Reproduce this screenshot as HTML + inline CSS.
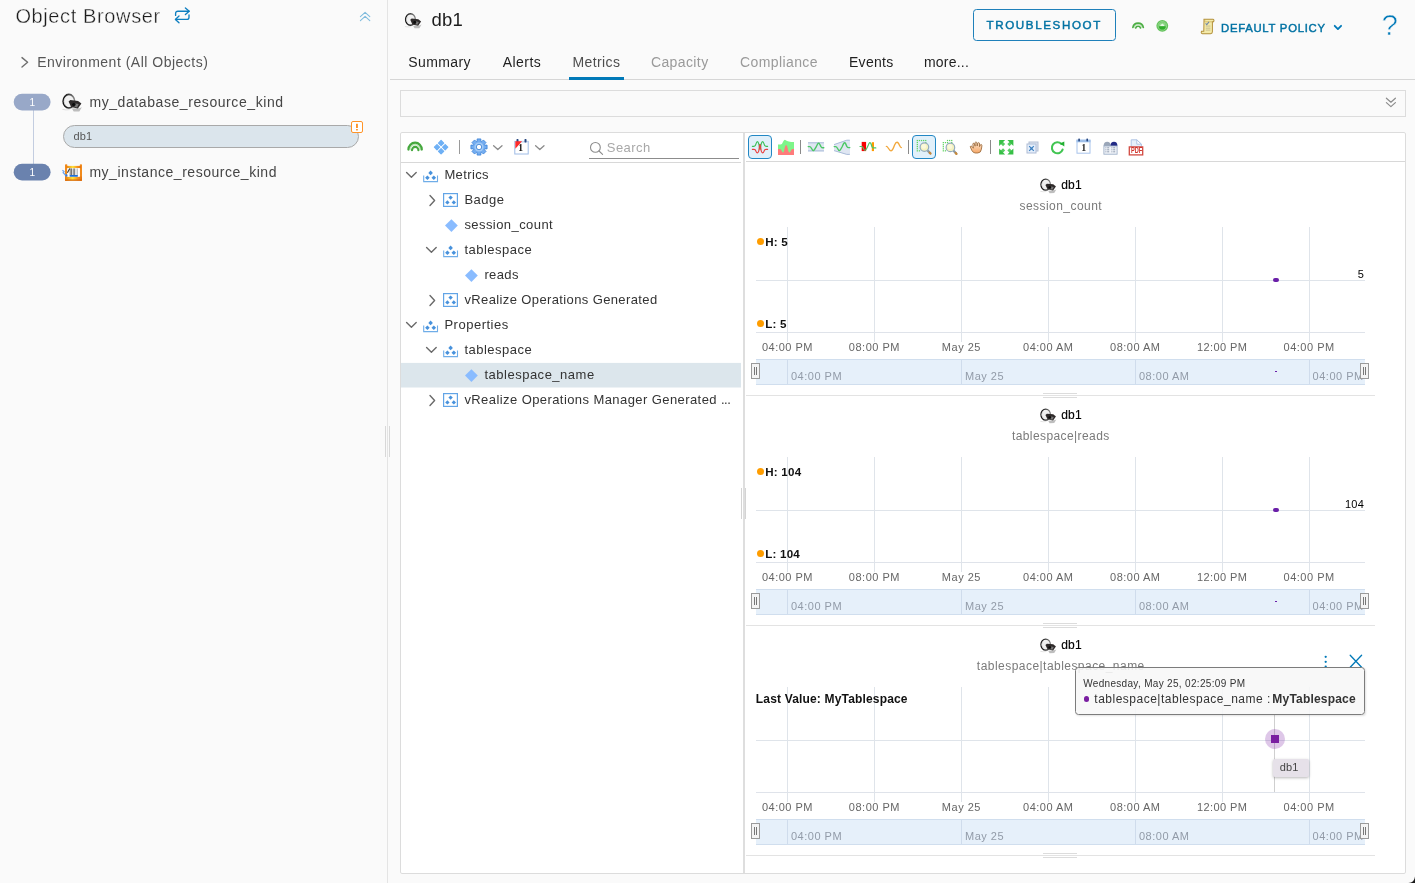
<!DOCTYPE html>
<html lang="en"><head><meta charset="utf-8"><title>Object Browser - db1 Metrics</title>
<style>
html,body{margin:0;padding:0;}
body{width:1415px;height:883px;overflow:hidden;position:relative;background:#fafafa;font-family:"Liberation Sans", sans-serif;}
#root{position:absolute;left:0;top:0;width:1415px;height:883px;will-change:transform;}
.t{position:absolute;white-space:nowrap;line-height:1;}
.r{position:absolute;box-sizing:border-box;}
svg{overflow:visible;}
</style></head><body>
<div id="root">
<div class="r" style="left:387px;top:0px;width:1px;height:883px;background:#e4e4e4;"></div>
<div class="r" style="left:385px;top:426px;width:1px;height:31px;background:#d8d8d8;"></div>
<div class="r" style="left:389px;top:426px;width:1px;height:31px;background:#d8d8d8;"></div>
<div class="t" style="left:15.40px;top:6.27px;font-size:20px;color:#1c1c1c;letter-spacing:0.62px;-webkit-text-stroke:0.35px #fafafa;">Object Browser</div>
<svg class="r" style="left:172px;top:4px;" width="22" height="22" viewBox="0 0 22 22" preserveAspectRatio="none"><g fill="none" stroke="#0f7fc0" stroke-width="1.35" stroke-linecap="round" stroke-linejoin="round"><path d="M3.6 11.4V9.4a2.2 2.2 0 0 1 2.2-2.2H17"/><path d="M13.4 3.9l3.8 3.3-3.8 3.4"/><path d="M17 10.8v2.4a2.2 2.2 0 0 1-2.2 2.2H3.6"/><path d="M7 12l-3.6 3.4L7 18.8"/></g></svg>
<svg class="r" style="left:358px;top:8px;" width="16" height="16" viewBox="0 0 16 16" preserveAspectRatio="none"><g fill="none" stroke="#7fbbdd" stroke-width="1.1" stroke-linecap="round" stroke-linejoin="round"><path d="M2.4 8.6L7.1 4.3l4.7 4.3"/><path d="M2.4 12.7l4.7-4.3 4.7 4.3"/></g></svg>
<svg class="r" style="left:18px;top:54px;" width="14" height="16" viewBox="0 0 14 16" preserveAspectRatio="none"><path d="M4 3.6l5.6 4.7L4 13" fill="none" stroke="#6e6e6e" stroke-width="1.4" stroke-linecap="round" stroke-linejoin="round"/></svg>
<div class="t" style="left:37.20px;top:55.15px;font-size:14px;color:#565656;letter-spacing:0.5px;">Environment (All Objects)</div>
<div class="r" style="left:33px;top:108px;width:1px;height:58px;background:#c3cde0;"></div>
<svg class="r" style="left:10px;top:90px;" width="46" height="24" viewBox="0 0 46 24" preserveAspectRatio="none"><rect x="3.7" y="3.7" width="36.9" height="16.7" rx="8.35" fill="#98a8c8"/></svg>
<div class="t" style="left:32.20px;top:97.73px;font-size:10px;color:#fff;transform:translateX(-50%);">1</div>
<svg class="r" style="left:10px;top:160px;" width="46" height="24" viewBox="0 0 46 24" preserveAspectRatio="none"><rect x="3.7" y="3.8" width="36.9" height="16.7" rx="8.35" fill="#6a82ae"/></svg>
<div class="t" style="left:32.20px;top:167.73px;font-size:10px;color:#fff;transform:translateX(-50%);">1</div>
<svg class="r" style="left:56px;top:88px;" width="32" height="28" viewBox="0 0 32 28" preserveAspectRatio="none"><defs><linearGradient id="rg13" x1="0" y1="0.5" x2="1" y2="0.3"><stop offset="0" stop-color="#111"/><stop offset="0.55" stop-color="#3a3a3a"/><stop offset="1" stop-color="#8a8a8a"/></linearGradient><filter id="bf13" x="-20%" y="-20%" width="140%" height="140%"><feGaussianBlur stdDeviation="0.35"/></filter></defs><g transform="translate(12.9,13.2) scale(1.0)" filter="url(#bf13)"><path d="M-6.5 8.2q4 1 7.4 0.2" fill="none" stroke="#dedede" stroke-width="1"/><path d="M3 7.4l7.4-0.4 2.6-1 -2.6 4.2 -5.6 0.2z" fill="#a8a8a8" opacity="0.75"/><ellipse cx="0" cy="0" rx="5.8" ry="6.8" fill="#f1f1f1" stroke="url(#rg13)" stroke-width="1.55"/><path d="M-3.6 -3.4a5 5.4 0 0 0 0.4 7.4" fill="none" stroke="#cfcfcf" stroke-width="0.8"/><path d="M-0.3 0.4l1.7-1.5 7.8 0.8 3.3 2.6 -3.5 5 -6.8-1.5z" fill="#2e2b2b"/><path d="M6.2 2.2l3.6 0.6 -1.6 3.4 -2.6-0.6z" fill="#8c8c8c" opacity="0.8"/><ellipse cx="5" cy="3.4" rx="1.7" ry="1.5" fill="#0c0c0c"/></g></svg>
<div class="t" style="left:89.40px;top:95.05px;font-size:14px;color:#454545;letter-spacing:0.58px;">my_database_resource_kind</div>
<div class="r" style="left:63px;top:124.5px;width:296px;height:23px;background:#dbe5ec;border:1px solid #a9a9a9;border-radius:12px;"></div>
<div class="t" style="left:73.60px;top:130.89px;font-size:11px;color:#565656;letter-spacing:0.1px;">db1</div>
<div class="r" style="left:350.5px;top:121px;width:12px;height:12px;background:#fff;border:1.4px solid #ff9428;border-radius:2px;"></div>
<svg class="r" style="left:350px;top:120px;" width="14" height="14" viewBox="0 0 14 14" preserveAspectRatio="none"><rect x="6.0" y="3.7" width="1.9" height="4.4" rx="0.4" fill="#ff9428"/><rect x="6.0" y="8.9" width="1.9" height="1.5" rx="0.4" fill="#ff9428"/></svg>
<svg class="r" style="left:56px;top:158px;" width="32" height="28" viewBox="0 0 32 28" preserveAspectRatio="none"><defs><linearGradient id="og" x1="0" y1="0" x2="1" y2="0"><stop offset="0" stop-color="#e8780f"/><stop offset="0.45" stop-color="#ffe23a"/><stop offset="0.75" stop-color="#f7941e"/><stop offset="1" stop-color="#e07010"/></linearGradient><filter id="ib" x="-20%" y="-20%" width="140%" height="140%"><feGaussianBlur stdDeviation="0.3"/></filter></defs><g filter="url(#ib)"><rect x="9" y="6.2" width="2.3" height="16.5" rx="0.8" fill="#f08a1c"/><rect x="23.8" y="6.2" width="2.2" height="16.5" rx="0.8" fill="#f08a1c"/><rect x="10" y="7.9" width="15" height="2.3" fill="url(#og)"/><rect x="9" y="18.6" width="17" height="4.2" rx="0.9" fill="url(#og)"/><rect x="9" y="21.4" width="17" height="1.4" rx="0.7" fill="#d8690f"/><rect x="11.3" y="10.2" width="12.5" height="8.5" fill="#fff"/><g fill="#3a3a3a"><rect x="13.8" y="10.4" width="0.7" height="6.8"/><rect x="15.3" y="10.4" width="0.7" height="6.8"/><rect x="16.8" y="10.4" width="0.7" height="6.8"/><rect x="18.2" y="10.4" width="0.6" height="6.8"/></g><g fill="#b5b5b5"><rect x="19.6" y="10.4" width="0.8" height="6.8"/><rect x="21" y="10.4" width="0.8" height="6.8"/></g><path d="M11.4 14.8l2.4-4.4" stroke="#3a3a3a" stroke-width="1.1"/><rect x="13.5" y="17" width="8.5" height="1.8" rx="0.8" fill="#1e6fdc"/><path d="M6.4 12.2l1.6 1.4-0.8 1 2 2.2 1.6 1.6" fill="none" stroke="#6fa5ec" stroke-width="1.3"/><circle cx="10.4" cy="17.4" r="1.1" fill="#2f7be0"/></g></svg>
<div class="t" style="left:89.40px;top:165.15px;font-size:14px;color:#454545;letter-spacing:0.53px;">my_instance_resource_kind</div>
<svg class="r" style="left:400px;top:8px;" width="30" height="24" viewBox="0 0 30 24" preserveAspectRatio="none"><defs><linearGradient id="rg21" x1="0" y1="0.5" x2="1" y2="0.3"><stop offset="0" stop-color="#111"/><stop offset="0.55" stop-color="#3a3a3a"/><stop offset="1" stop-color="#8a8a8a"/></linearGradient><filter id="bf21" x="-20%" y="-20%" width="140%" height="140%"><feGaussianBlur stdDeviation="0.5"/></filter></defs><g transform="translate(10.5,11.5) scale(0.85)" filter="url(#bf21)"><path d="M-6.5 8.2q4 1 7.4 0.2" fill="none" stroke="#dedede" stroke-width="1"/><path d="M3 7.4l7.4-0.4 2.6-1 -2.6 4.2 -5.6 0.2z" fill="#a8a8a8" opacity="0.75"/><ellipse cx="0" cy="0" rx="5.8" ry="6.8" fill="#f1f1f1" stroke="url(#rg21)" stroke-width="1.55"/><path d="M-3.6 -3.4a5 5.4 0 0 0 0.4 7.4" fill="none" stroke="#cfcfcf" stroke-width="0.8"/><path d="M-0.3 0.4l1.7-1.5 7.8 0.8 3.3 2.6 -3.5 5 -6.8-1.5z" fill="#2e2b2b"/><path d="M6.2 2.2l3.6 0.6 -1.6 3.4 -2.6-0.6z" fill="#8c8c8c" opacity="0.8"/><ellipse cx="5" cy="3.4" rx="1.7" ry="1.5" fill="#0c0c0c"/></g></svg>
<div class="t" style="left:431.40px;top:10.64px;font-size:18.5px;color:#1c1c1c;letter-spacing:0.3px;">db1</div>
<div class="t" style="left:408.30px;top:55.15px;font-size:14px;color:#1f1f1f;letter-spacing:0.4px;">Summary</div>
<div class="t" style="left:502.70px;top:55.15px;font-size:14px;color:#1f1f1f;letter-spacing:0.45px;">Alerts</div>
<div class="t" style="left:572.40px;top:55.15px;font-size:14px;color:#4d4d4d;letter-spacing:0.42px;">Metrics</div>
<div class="t" style="left:650.90px;top:55.15px;font-size:14px;color:#9a9a9a;letter-spacing:0.4px;">Capacity</div>
<div class="t" style="left:740.00px;top:55.15px;font-size:14px;color:#9a9a9a;letter-spacing:0.4px;">Compliance</div>
<div class="t" style="left:849.00px;top:55.15px;font-size:14px;color:#1f1f1f;letter-spacing:0.27px;">Events</div>
<div class="t" style="left:924.00px;top:55.15px;font-size:14px;color:#1f1f1f;letter-spacing:0.2px;">more...</div>
<div class="r" style="left:390px;top:79px;width:1025px;height:1px;background:#d6d6d6;"></div>
<div class="r" style="left:569px;top:77px;width:54.5px;height:3px;background:#0079b8;"></div>
<div class="r" style="left:973px;top:9px;width:143px;height:32px;border:1.2px solid #1f80ba;border-radius:3.5px;"></div>
<div class="t" style="left:986.50px;top:19.38px;font-size:11.6px;color:#0072a3;letter-spacing:1.62px;-webkit-text-stroke:0.45px #0072a3;">TROUBLESHOOT</div>
<svg class="r" style="left:1131px;top:18.4px;" width="14" height="14" viewBox="0 0 14 14" preserveAspectRatio="none"><g fill="none" stroke-linecap="round"><path d="M3.2 9.6a4 4 0 0 1 7.8 0" stroke="#c4e6be" stroke-width="1.2"/><path d="M1.9 9.4a5.3 5.3 0 0 1 10.4 0" stroke="#4cae44" stroke-width="1.7"/><path d="M4.7 10a2.5 2.5 0 0 1 4.8 0" stroke="#4cae44" stroke-width="1.6"/></g></svg>
<svg class="r" style="left:1155.4px;top:19.0px;" width="14" height="14" viewBox="0 0 14 14" preserveAspectRatio="none"><circle cx="7.3" cy="6.8" r="5.9" fill="#62c25a"/><circle cx="7.3" cy="6.8" r="4.3" fill="none" stroke="#a4e09e" stroke-width="0.7"/><circle cx="7.3" cy="6.8" r="3.5" fill="#8ed688"/><path d="M3.9 7.2a3.4 3.4 0 0 0 6.8 0z" fill="#2fae2b"/><path d="M5.2 6.9q0.2-1.6 1.4-1.6l0.7-0.9 0.7 0.9q1.2 0 1.4 1.6z" fill="#e4f6e2"/></svg>
<svg class="r" style="left:1200px;top:18.2px;" width="15" height="17" viewBox="0 0 15 16" preserveAspectRatio="none"><path d="M4 1.2h9q1.6 0.5 0.6 2.4h-1.2v9.4q0 1.8-1.8 1.8H2.4q-1.8-0.4-0.9-2.4h2.3z" fill="#f4eaa8" stroke="#b3903a" stroke-width="1"/><path d="M4 1.4q1.4 0.8 0.4 2.2h7.6" fill="none" stroke="#c9ab55" stroke-width="0.7"/><path d="M5.8 7.6h4.6M5.8 9.6h4.6M5.8 11.4h4.6" stroke="#b9b08a" stroke-width="0.7"/><path d="M5.6 5l1.2 1.3 2.2-2.6" fill="none" stroke="#6d86a8" stroke-width="1"/></svg>
<div class="t" style="left:1221.00px;top:22.83px;font-size:11.3px;color:#0072a3;letter-spacing:0.74px;-webkit-text-stroke:0.45px #0072a3;">DEFAULT POLICY</div>
<svg class="r" style="left:1332px;top:24px;" width="12" height="9" viewBox="0 0 12 9" preserveAspectRatio="none"><path d="M2.7 1.8l3.2 3.3 3.2-3.3" fill="none" stroke="#0079b8" stroke-width="1.8" stroke-linecap="round" stroke-linejoin="round"/></svg>
<div class="t" style="left:1381.60px;top:10.34px;font-size:29.6px;color:#0079b8;-webkit-text-stroke:0.55px #fafafa;">?</div>
<div class="r" style="left:400px;top:90px;width:1006px;height:27px;background:#fafafa;border:1px solid #dcdcdc;"></div>
<svg class="r" style="left:1384px;top:96px;" width="14" height="13" viewBox="0 0 14 13" preserveAspectRatio="none"><g fill="none" stroke="#8c8c8c" stroke-width="1.2" stroke-linecap="round" stroke-linejoin="round"><path d="M2.4 2.2l4.5 4 4.5-4"/><path d="M2.4 6.6l4.5 4 4.5-4"/></g></svg>
<div class="r" style="left:400px;top:132px;width:1006px;height:742px;background:#fff;border:1px solid #dcdcdc;border-radius:2px;"></div>
<div class="r" style="left:743px;top:133px;width:1.6px;height:740px;background:#dedede;"></div>
<div class="r" style="left:741px;top:488px;width:1px;height:31px;background:#d4d4d4;"></div>
<div class="r" style="left:745px;top:488px;width:1px;height:31px;background:#d4d4d4;"></div>
<div class="r" style="left:401px;top:162px;width:340px;height:1px;background:#d8d8d8;"></div>
<svg class="r" style="left:406px;top:139px;" width="18" height="14" viewBox="0 0 18 14" preserveAspectRatio="none"><g fill="none" stroke-linecap="round"><path d="M4 10.8a5 5.2 0 0 1 10.2 0" stroke="#c4e6be" stroke-width="1.6"/><path d="M2.4 10.6a6.7 6.9 0 0 1 13.4 0" stroke="#46a83e" stroke-width="2.2"/><path d="M6 11.2a3.2 3.3 0 0 1 6.4 0" stroke="#46a83e" stroke-width="2.1"/></g></svg>
<svg class="r" style="left:433px;top:139px;" width="16" height="16" viewBox="0 0 16 16" preserveAspectRatio="none"><path d="M8.1 1.4999999999999996l2.6 2.6-2.6 2.6-2.6-2.6z" fill="#6eb0f5" stroke="#6eb0f5" stroke-width="1.2" stroke-linejoin="round"/><path d="M4.0 5.6l2.6 2.6-2.6 2.6-2.6-2.6z" fill="#6eb0f5" stroke="#6eb0f5" stroke-width="1.2" stroke-linejoin="round"/><path d="M12.2 5.6l2.6 2.6-2.6 2.6-2.6-2.6z" fill="#6eb0f5" stroke="#6eb0f5" stroke-width="1.2" stroke-linejoin="round"/><path d="M8.1 9.700000000000001l2.6 2.6-2.6 2.6-2.6-2.6z" fill="#6eb0f5" stroke="#6eb0f5" stroke-width="1.2" stroke-linejoin="round"/></svg>
<div class="r" style="left:459px;top:140px;width:1.3px;height:14px;background:#9a9a9a;"></div>
<svg class="r" style="left:470px;top:138px;" width="18" height="18" viewBox="0 0 18 18" preserveAspectRatio="none"><path d="M17.08,7.11L17.08,10.89L14.70,10.89L14.36,11.69L16.05,13.38L13.38,16.05L11.69,14.36L10.89,14.70L10.89,17.08L7.11,17.08L7.11,14.70L6.31,14.36L4.62,16.05L1.95,13.38L3.64,11.69L3.30,10.89L0.92,10.89L0.92,7.11L3.30,7.11L3.64,6.31L1.95,4.62L4.62,1.95L6.31,3.64L7.11,3.30L7.11,0.92L10.89,0.92L10.89,3.30L11.69,3.64L13.38,1.95L16.05,4.62L14.36,6.31L14.70,7.11z" fill="#74adf0" stroke="#3a82d8" stroke-width="0.8" stroke-linejoin="round"/><circle cx="9" cy="9" r="4.6" fill="#a4cbf6"/><circle cx="9" cy="9" r="2.7" fill="#fff" stroke="#2f78d0" stroke-width="0.8"/></svg>
<svg class="r" style="left:492.4px;top:144.3px;" width="12" height="8" viewBox="0 0 12 8" preserveAspectRatio="none"><path d="M1.6 1.8l4.2 3.8 4.2-3.8" fill="none" stroke="#8a8a8a" stroke-width="1.3" stroke-linecap="round" stroke-linejoin="round"/></svg>
<svg class="r" style="left:513.5px;top:139px;" width="15" height="16" viewBox="0 0 15 16" preserveAspectRatio="none"><rect x="0.8" y="2.4" width="13.4" height="12.6" fill="#fff" stroke="#9fbce6" stroke-width="1"/><rect x="1.3" y="2.0" width="12.4" height="1.6" fill="#c9dcf5"/><rect x="2.5" y="0.1" width="2" height="3.3" rx="0.6" fill="#27467f"/><rect x="10.5" y="0.1" width="2" height="3.3" rx="0.6" fill="#27467f"/><path d="M1.3 2.2h6.8L1.3 9.8z" fill="#ff2a2a"/></svg>
<div class="t" style="left:518.30px;top:144.16px;font-size:9.5px;color:#111;font-weight:700;font-family:'Liberation Serif',serif;">1</div>
<svg class="r" style="left:534.2px;top:144.3px;" width="12" height="8" viewBox="0 0 12 8" preserveAspectRatio="none"><path d="M1.6 1.8l4.2 3.8 4.2-3.8" fill="none" stroke="#8a8a8a" stroke-width="1.3" stroke-linecap="round" stroke-linejoin="round"/></svg>
<svg class="r" style="left:588px;top:140px;" width="16" height="16" viewBox="0 0 16 16" preserveAspectRatio="none"><circle cx="7.4" cy="7.4" r="4.9" fill="none" stroke="#8c8c8c" stroke-width="1.1"/><path d="M11 11l3.6 3.4" stroke="#8c8c8c" stroke-width="1.1" stroke-linecap="round"/></svg>
<div class="t" style="left:606.80px;top:140.80px;font-size:13px;color:#a8a8a8;letter-spacing:0.45px;">Search</div>
<div class="r" style="left:589px;top:158px;width:150px;height:1px;background:#8c8c8c;"></div>
<svg class="r" style="left:405px;top:170.3px;" width="13" height="10" viewBox="0 0 13 10" preserveAspectRatio="none"><path d="M1.6 2.6l4.8 4.6 4.8-4.6" fill="none" stroke="#6a6a6a" stroke-width="1.4" stroke-linecap="round" stroke-linejoin="round"/></svg>
<svg class="r" style="left:422.7px;top:169.20000000000002px;" width="15" height="14" viewBox="0 0 15 14" preserveAspectRatio="none"><path d="M7.6 1.6l2.3 2.3-2.3 2.3-2.3-2.3z" fill="#4892dc"/><path d="M4.4 6.400000000000001l2.3 2.3-2.3 2.3-2.3-2.3z" fill="#4892dc"/><path d="M10.8 6.400000000000001l2.3 2.3-2.3 2.3-2.3-2.3z" fill="#4892dc"/><path d="M0.7 6.6v6h13.8v-6" fill="none" stroke="#6fade8" stroke-width="1.1"/></svg>
<div class="t" style="left:444.40px;top:168.10px;font-size:13px;color:#333;letter-spacing:0.38px;">Metrics</div>
<svg class="r" style="left:427.6px;top:193.9px;" width="9" height="13" viewBox="0 0 9 13" preserveAspectRatio="none"><path d="M2 1.6l4.6 4.9L2 11.4" fill="none" stroke="#6a6a6a" stroke-width="1.4" stroke-linecap="round" stroke-linejoin="round"/></svg>
<svg class="r" style="left:442.8px;top:193.10000000000002px;" width="15" height="14" viewBox="0 0 15 14" preserveAspectRatio="none"><rect x="0.6" y="0.6" width="13.8" height="12.8" fill="#fff" stroke="#62a4e6" stroke-width="1.2"/><path d="M7.6 2.415l2.1849999999999996 2.1849999999999996-2.1849999999999996 2.1849999999999996-2.1849999999999996-2.1849999999999996z" fill="#4892dc"/><path d="M4.4 7.215000000000001l2.1849999999999996 2.1849999999999996-2.1849999999999996 2.1849999999999996-2.1849999999999996-2.1849999999999996z" fill="#4892dc"/><path d="M10.8 7.215000000000001l2.1849999999999996 2.1849999999999996-2.1849999999999996 2.1849999999999996-2.1849999999999996-2.1849999999999996z" fill="#4892dc"/></svg>
<div class="t" style="left:464.40px;top:193.10px;font-size:13px;color:#333;letter-spacing:0.5px;">Badge</div>
<svg class="r" style="left:444.5px;top:218.9px;" width="13" height="14" viewBox="0 0 13 14" preserveAspectRatio="none"><path d="M6.4 0.1999999999999993l6.4 6.4-6.4 6.4-6.4-6.4z" fill="#8abcff"/></svg>
<div class="t" style="left:464.40px;top:218.10px;font-size:13px;color:#333;letter-spacing:0.43px;">session_count</div>
<svg class="r" style="left:425px;top:245.3px;" width="13" height="10" viewBox="0 0 13 10" preserveAspectRatio="none"><path d="M1.6 2.6l4.8 4.6 4.8-4.6" fill="none" stroke="#6a6a6a" stroke-width="1.4" stroke-linecap="round" stroke-linejoin="round"/></svg>
<svg class="r" style="left:442.7px;top:244.20000000000002px;" width="15" height="14" viewBox="0 0 15 14" preserveAspectRatio="none"><path d="M7.6 1.6l2.3 2.3-2.3 2.3-2.3-2.3z" fill="#4892dc"/><path d="M4.4 6.400000000000001l2.3 2.3-2.3 2.3-2.3-2.3z" fill="#4892dc"/><path d="M10.8 6.400000000000001l2.3 2.3-2.3 2.3-2.3-2.3z" fill="#4892dc"/><path d="M0.7 6.6v6h13.8v-6" fill="none" stroke="#6fade8" stroke-width="1.1"/></svg>
<div class="t" style="left:464.40px;top:243.10px;font-size:13px;color:#333;letter-spacing:0.5px;">tablespace</div>
<svg class="r" style="left:464.5px;top:268.90000000000003px;" width="13" height="14" viewBox="0 0 13 14" preserveAspectRatio="none"><path d="M6.4 0.1999999999999993l6.4 6.4-6.4 6.4-6.4-6.4z" fill="#8abcff"/></svg>
<div class="t" style="left:484.40px;top:268.10px;font-size:13px;color:#333;letter-spacing:0.38px;">reads</div>
<svg class="r" style="left:427.6px;top:293.90000000000003px;" width="9" height="13" viewBox="0 0 9 13" preserveAspectRatio="none"><path d="M2 1.6l4.6 4.9L2 11.4" fill="none" stroke="#6a6a6a" stroke-width="1.4" stroke-linecap="round" stroke-linejoin="round"/></svg>
<svg class="r" style="left:442.8px;top:293.1px;" width="15" height="14" viewBox="0 0 15 14" preserveAspectRatio="none"><rect x="0.6" y="0.6" width="13.8" height="12.8" fill="#fff" stroke="#62a4e6" stroke-width="1.2"/><path d="M7.6 2.415l2.1849999999999996 2.1849999999999996-2.1849999999999996 2.1849999999999996-2.1849999999999996-2.1849999999999996z" fill="#4892dc"/><path d="M4.4 7.215000000000001l2.1849999999999996 2.1849999999999996-2.1849999999999996 2.1849999999999996-2.1849999999999996-2.1849999999999996z" fill="#4892dc"/><path d="M10.8 7.215000000000001l2.1849999999999996 2.1849999999999996-2.1849999999999996 2.1849999999999996-2.1849999999999996-2.1849999999999996z" fill="#4892dc"/></svg>
<div class="t" style="left:464.40px;top:293.10px;font-size:13px;color:#333;letter-spacing:0.38px;">vRealize Operations Generated</div>
<svg class="r" style="left:405px;top:320.3px;" width="13" height="10" viewBox="0 0 13 10" preserveAspectRatio="none"><path d="M1.6 2.6l4.8 4.6 4.8-4.6" fill="none" stroke="#6a6a6a" stroke-width="1.4" stroke-linecap="round" stroke-linejoin="round"/></svg>
<svg class="r" style="left:422.7px;top:319.2px;" width="15" height="14" viewBox="0 0 15 14" preserveAspectRatio="none"><path d="M7.6 1.6l2.3 2.3-2.3 2.3-2.3-2.3z" fill="#4892dc"/><path d="M4.4 6.400000000000001l2.3 2.3-2.3 2.3-2.3-2.3z" fill="#4892dc"/><path d="M10.8 6.400000000000001l2.3 2.3-2.3 2.3-2.3-2.3z" fill="#4892dc"/><path d="M0.7 6.6v6h13.8v-6" fill="none" stroke="#6fade8" stroke-width="1.1"/></svg>
<div class="t" style="left:444.40px;top:318.10px;font-size:13px;color:#333;letter-spacing:0.51px;">Properties</div>
<svg class="r" style="left:425px;top:345.3px;" width="13" height="10" viewBox="0 0 13 10" preserveAspectRatio="none"><path d="M1.6 2.6l4.8 4.6 4.8-4.6" fill="none" stroke="#6a6a6a" stroke-width="1.4" stroke-linecap="round" stroke-linejoin="round"/></svg>
<svg class="r" style="left:442.7px;top:344.2px;" width="15" height="14" viewBox="0 0 15 14" preserveAspectRatio="none"><path d="M7.6 1.6l2.3 2.3-2.3 2.3-2.3-2.3z" fill="#4892dc"/><path d="M4.4 6.400000000000001l2.3 2.3-2.3 2.3-2.3-2.3z" fill="#4892dc"/><path d="M10.8 6.400000000000001l2.3 2.3-2.3 2.3-2.3-2.3z" fill="#4892dc"/><path d="M0.7 6.6v6h13.8v-6" fill="none" stroke="#6fade8" stroke-width="1.1"/></svg>
<div class="t" style="left:464.40px;top:343.10px;font-size:13px;color:#333;letter-spacing:0.5px;">tablespace</div>
<svg class="r" style="left:401px;top:362px;" width="340" height="26" viewBox="0 0 340 26" preserveAspectRatio="none"><rect x="0" y="0.9" width="340" height="24.6" fill="#dce6ec"/></svg>
<svg class="r" style="left:464.5px;top:368.90000000000003px;" width="13" height="14" viewBox="0 0 13 14" preserveAspectRatio="none"><path d="M6.4 0.1999999999999993l6.4 6.4-6.4 6.4-6.4-6.4z" fill="#8abcff"/></svg>
<div class="t" style="left:484.40px;top:368.10px;font-size:13px;color:#333;letter-spacing:0.51px;">tablespace_name</div>
<svg class="r" style="left:427.6px;top:393.90000000000003px;" width="9" height="13" viewBox="0 0 9 13" preserveAspectRatio="none"><path d="M2 1.6l4.6 4.9L2 11.4" fill="none" stroke="#6a6a6a" stroke-width="1.4" stroke-linecap="round" stroke-linejoin="round"/></svg>
<svg class="r" style="left:442.8px;top:393.1px;" width="15" height="14" viewBox="0 0 15 14" preserveAspectRatio="none"><rect x="0.6" y="0.6" width="13.8" height="12.8" fill="#fff" stroke="#62a4e6" stroke-width="1.2"/><path d="M7.6 2.415l2.1849999999999996 2.1849999999999996-2.1849999999999996 2.1849999999999996-2.1849999999999996-2.1849999999999996z" fill="#4892dc"/><path d="M4.4 7.215000000000001l2.1849999999999996 2.1849999999999996-2.1849999999999996 2.1849999999999996-2.1849999999999996-2.1849999999999996z" fill="#4892dc"/><path d="M10.8 7.215000000000001l2.1849999999999996 2.1849999999999996-2.1849999999999996 2.1849999999999996-2.1849999999999996-2.1849999999999996z" fill="#4892dc"/></svg>
<div class="t" style="left:464.40px;top:393.10px;font-size:13px;color:#333;letter-spacing:0.42px;">vRealize Operations Manager Generated <span style="letter-spacing:-0.5px">...</span></div>
<div class="r" style="left:746px;top:161px;width:659px;height:1px;background:#d8d8d8;"></div>
<div class="r" style="left:748px;top:135.1px;width:24px;height:24px;background:#e1f0fa;border:1.7px solid #2287c4;border-radius:4px;"></div>
<div class="r" style="left:912px;top:135.1px;width:24px;height:24px;background:#e1f0fa;border:1.7px solid #2287c4;border-radius:4px;"></div>
<svg class="r" style="left:752px;top:139px;" width="16" height="16" viewBox="0 0 16 16" preserveAspectRatio="none"><rect x="7" y="5" width="2" height="3.2" fill="#ef4a4a"/><rect x="7" y="8.2" width="2" height="2.4" fill="#3cbf58"/><g fill="none" stroke-width="1.15" stroke-linecap="round" stroke-linejoin="round"><path d="M0.4 7.4h1.6q1.4 0 2-2.6q0.6-2.2 1.4-2.2q0.8 0 1.4 2.4l0.7 3.4q0.5 2 1 0l0.7-3.4q0.6-2.4 1.4-2.4q0.8 0 1.4 2.2q0.6 2.6 2 2.6h1.6" stroke="#3cbf58"/><path d="M0.4 10.4h1.6q1.4 0 2 1.8q0.6 1.6 1.4 1.6q0.8 0 1.4-2l0.7-4.6q0.5-2 1 0l0.7 4.6q0.6 2 1.4 2q0.8 0 1.4-1.6q0.6-1.8 2-1.8h1.6" stroke="#ea3f3f"/></g></svg>
<svg class="r" style="left:778px;top:139px;" width="16" height="16" viewBox="0 0 16 16" preserveAspectRatio="none"><path d="M0 5.4h2.6q1.6 0 2.6-3q1.2-2.4 2.6-1.2q2 1.6 8.2 1.9v12.9H0z" fill="#7ef58a"/><path d="M0 10h2q1 0 1.6 1.8q0.9 2.4 1.8 1.4q0.8-0.8 1.4-4.6q0.6-2.6 1.4-2.6q0.8 0 1.3 2.6q0.6 3.8 1.5 4.6q1 1 1.8-1.4q0.6-1.8 1.6-1.8h1.6v6H0z" fill="#ff7b7b"/></svg>
<div class="r" style="left:800px;top:140.2px;width:1px;height:13.6px;background:#8a8a8a;"></div>
<svg class="r" style="left:808px;top:139px;" width="16" height="16" viewBox="0 0 16 16" preserveAspectRatio="none"><rect x="0" y="3.4" width="16" height="9" fill="#dfe6f2"/><path d="M0 3.8h16M0 11.9h16" stroke="#a9bbd8" stroke-width="1"/><path d="M0.2 7.6h1.4q1 0 1.8 1.6q1.4 2.8 2.2 2.4q0.8-0.4 2.4-3.4l1.6-3.2q1.1-1.8 2 0l1.4 2.6q0.8 1.2 1.8 1.2h1" fill="none" stroke="#4cc765" stroke-width="1.4" stroke-linejoin="round" stroke-linecap="round"/></svg>
<svg class="r" style="left:834px;top:139px;" width="16" height="16" viewBox="0 0 16 16" preserveAspectRatio="none"><path d="M0 5.4L12.6 1h3.4v14.6h-3.4L0 11.8z" fill="#dfe6f2"/><path d="M0 5.6L12.8 1.2h3M0 11.6l12.8 3.8h3" fill="none" stroke="#a9bbd8" stroke-width="1"/><path d="M0.2 7.6h1.4q1 0 1.8 1.6q1.4 2.8 2.2 2.4q0.8-0.4 2.4-3.6l1.6-3.4q1.1-1.8 2 0l1.2 2.8q0.8 1.2 1.8 1.2h1.2" fill="none" stroke="#4cc765" stroke-width="1.4" stroke-linejoin="round" stroke-linecap="round"/></svg>
<svg class="r" style="left:860px;top:139px;" width="16" height="16" viewBox="0 0 16 16" preserveAspectRatio="none"><rect x="1.7" y="2.9" width="4.4" height="9.2" fill="#f80000"/><rect x="11.8" y="3.2" width="2.2" height="8.9" fill="#ff9a00"/><path d="M0 7.5h1.6q1 0 1.6 1.4q1 2.6 1.8 2.6q0.8 0 2.2-3l1.8-4q1-1.8 2 0.2l0.8 2.6q0.4 1.6 1.4 1.6h2.6" fill="none" stroke="#4cc765" stroke-width="1.2" stroke-linejoin="round" stroke-linecap="round"/></svg>
<svg class="r" style="left:886px;top:139px;" width="16" height="16" viewBox="0 0 16 16" preserveAspectRatio="none"><path d="M0.4 7.4q0.8 0 1.8 1.6q1.6 2.8 2.8 2.8q1.4 0 2.6-3.2l1-2.6q1.2-2.8 2.4-2.8q1.4 0 2.6 3.4q0.8 2 1.8 2" fill="none" stroke="#f2a73b" stroke-width="1.35" stroke-linecap="round"/></svg>
<div class="r" style="left:908px;top:140.2px;width:1px;height:13.6px;background:#8a8a8a;"></div>
<svg class="r" style="left:916px;top:139px;" width="17" height="17" viewBox="0 0 17 17" preserveAspectRatio="none"><rect x="0.7" y="0.9" width="1.25" height="1.25" fill="#5fd35f"/><rect x="2.8" y="0.9" width="1.25" height="1.25" fill="#5fd35f"/><rect x="4.9" y="0.9" width="1.25" height="1.25" fill="#5fd35f"/><rect x="7.0" y="0.9" width="1.25" height="1.25" fill="#5fd35f"/><rect x="9.1" y="0.9" width="1.25" height="1.25" fill="#5fd35f"/><rect x="0.7" y="2.9" width="1.25" height="1.25" fill="#5fd35f"/><rect x="0.7" y="5.0" width="1.25" height="1.25" fill="#5fd35f"/><rect x="0.7" y="7.0" width="1.25" height="1.25" fill="#5fd35f"/><rect x="0.7" y="9.1" width="1.25" height="1.25" fill="#5fd35f"/><rect x="0.7" y="11.2" width="1.25" height="1.25" fill="#5fd35f"/><rect x="2.8" y="11.2" width="1.25" height="1.25" fill="#5fd35f"/><rect x="9.1" y="3.0" width="1.25" height="1.25" fill="#5fd35f"/><path d="M11.6 11.4l2.6 2.9" stroke="#8a9aa6" stroke-width="2.3" stroke-linecap="round"/><path d="M13.7 13.7l0.8 0.9" stroke="#c98a3a" stroke-width="2.2" stroke-linecap="round"/><circle cx="8.4" cy="8.1" r="4.3" fill="#f5f2c0" stroke="#93acbf" stroke-width="1.2"/><circle cx="7.8" cy="7.4" r="2.4" fill="#fbf9dc"/></svg>
<svg class="r" style="left:942px;top:139px;" width="17" height="17" viewBox="0 0 17 17" preserveAspectRatio="none"><rect x="4.9" y="0.9" width="1.25" height="1.25" fill="#5fd35f"/><rect x="7.0" y="0.9" width="1.25" height="1.25" fill="#5fd35f"/><rect x="9.1" y="0.9" width="1.25" height="1.25" fill="#5fd35f"/><rect x="0.7" y="3.0" width="1.25" height="1.25" fill="#5fd35f"/><rect x="2.8" y="3.0" width="1.25" height="1.25" fill="#5fd35f"/><rect x="4.9" y="3.0" width="1.25" height="1.25" fill="#5fd35f"/><rect x="0.7" y="5.1" width="1.25" height="1.25" fill="#5fd35f"/><rect x="0.7" y="7.1" width="1.25" height="1.25" fill="#5fd35f"/><rect x="0.7" y="9.2" width="1.25" height="1.25" fill="#5fd35f"/><rect x="0.7" y="11.2" width="1.25" height="1.25" fill="#5fd35f"/><rect x="2.8" y="11.2" width="1.25" height="1.25" fill="#5fd35f"/><rect x="9.1" y="3.0" width="1.25" height="1.25" fill="#5fd35f"/><path d="M11.6 11.7l2.6 2.9" stroke="#8a9aa6" stroke-width="2.3" stroke-linecap="round"/><path d="M13.7 14.0l0.8 0.9" stroke="#c98a3a" stroke-width="2.2" stroke-linecap="round"/><circle cx="8.4" cy="8.4" r="4.3" fill="#f5f2c0" stroke="#93acbf" stroke-width="1.2"/><circle cx="7.8" cy="7.7" r="2.4" fill="#fbf9dc"/></svg>
<svg class="r" style="left:969px;top:140.5px;" width="15" height="13" viewBox="0 0 15 13" preserveAspectRatio="none"><defs><linearGradient id="hg" x1="0" y1="0" x2="0" y2="1"><stop offset="0" stop-color="#fbe6d2"/><stop offset="1" stop-color="#f6a767"/></linearGradient></defs><path d="M1.2 5.6q0.8-1.2 2 0l1.2 1.6l-0.6-4q0.2-1.4 1.4-1l0.9 3l0-3.6q0.6-1.2 1.7-0.2l0.4 3.6l0.6-3q0.9-1 1.7 0.2l0 3.4l0.9-1.8q1-0.8 1.6 0.4l-0.6 4q-0.4 3.6-3.6 3.8h-2.6q-2.2-0.2-3.4-2.6z" fill="url(#hg)" stroke="#9a6a3c" stroke-width="0.85" stroke-linejoin="round"/></svg>
<div class="r" style="left:990px;top:140.2px;width:1px;height:13.6px;background:#8a8a8a;"></div>
<svg class="r" style="left:998.6px;top:139.9px;" width="15" height="15" viewBox="0 0 15 15" preserveAspectRatio="none"><path d="M5.10 5.10L1.70 1.70" stroke="#55cc62" stroke-width="3.0"/><path d="M0.10 0.10L6.10 0.10L0.10 6.10z" fill="#37c046"/><path d="M9.40 5.10L12.80 1.70" stroke="#55cc62" stroke-width="3.0"/><path d="M14.40 0.10L8.40 0.10L14.40 6.10z" fill="#37c046"/><path d="M5.10 9.40L1.70 12.80" stroke="#55cc62" stroke-width="3.0"/><path d="M0.10 14.40L6.10 14.40L0.10 8.40z" fill="#37c046"/><path d="M9.40 9.40L12.80 12.80" stroke="#55cc62" stroke-width="3.0"/><path d="M14.40 14.40L8.40 14.40L14.40 8.40z" fill="#37c046"/></svg>
<svg class="r" style="left:1025.6px;top:140.7px;" width="13" height="13" viewBox="0 0 13 13" preserveAspectRatio="none"><rect x="3" y="1" width="9" height="9" fill="#dde4f0" stroke="#b3bfd4" stroke-width="1"/><rect x="1" y="3" width="9" height="9" fill="#e4eefb" stroke="#b0bdd6" stroke-width="1"/><path d="M3.2 5.2l4.6 4.6M7.8 5.2L3.2 9.8" stroke="#3a7fc0" stroke-width="1.2"/><rect x="4.6" y="6.6" width="1.8" height="1.8" fill="#3a7fc0"/></svg>
<svg class="r" style="left:1050px;top:139.5px;" width="15" height="15" viewBox="0 0 15 15" preserveAspectRatio="none"><path d="M11.4 4.0A5.5 5.5 0 1 0 12.6 9.6" fill="none" stroke="#41c552" stroke-width="2.1" stroke-linecap="round"/><path d="M9.8 3.6L14.3 1.5l0 5z" fill="#23b033"/></svg>
<svg class="r" style="left:1076.4px;top:138.4px;" width="15" height="16" viewBox="0 0 15 16" preserveAspectRatio="none"><rect x="1" y="2.2" width="13" height="13" fill="#fff" stroke="#a8c4ec" stroke-width="1"/><rect x="0.5" y="1.7" width="14" height="2.6" fill="#9fc0ea"/><rect x="2.3" y="0.4" width="1.6" height="3" rx="0.6" fill="#27467f"/><rect x="10.4" y="0.4" width="1.6" height="3" rx="0.6" fill="#27467f"/></svg>
<div class="t" style="left:1081.30px;top:143.44px;font-size:10px;color:#2a2a2a;font-weight:700;font-family:'Liberation Serif',serif;">1</div>
<svg class="r" style="left:1102.6px;top:140.6px;" width="15" height="14" viewBox="0 0 15 14" preserveAspectRatio="none"><path d="M0.6 5q0.2-4.2 3.6-4.2t3.4 4.2z" fill="#9aa6b8"/><path d="M7.4 5q0.2-4.2 3.6-4.2t3.4 4.2z" fill="#232b86"/><rect x="0.9" y="5" width="13.2" height="8.2" fill="#f1f4f9" stroke="#9fb0c8" stroke-width="0.9"/><path d="M2.4 6.8h1M4.2 6.8h2M2.4 8.8h1M4.2 8.8h2M2.4 10.8h1M4.2 10.8h2M8.4 6.8h1M10.2 6.8h2M8.4 8.8h1M10.2 8.8h2M8.4 10.8h1M10.2 10.8h2" stroke="#8290a6" stroke-width="0.9"/></svg>
<svg class="r" style="left:1128px;top:138.6px;" width="16" height="17" viewBox="0 0 16 17" preserveAspectRatio="none"><path d="M3.2 0.8h5.6l4.6 4.4v3H3.2z" fill="#e6f0fb" stroke="#a8c0e2" stroke-width="0.9"/><path d="M8.8 0.8v4.4h4.6z" fill="#fff" stroke="#a8c0e2" stroke-width="0.9"/><rect x="1.3" y="7.9" width="13.4" height="8" fill="#fff" stroke="#d24a42" stroke-width="1.3"/></svg>
<div class="t" style="left:1130.50px;top:146.29px;font-size:8.4px;color:#d0342c;font-weight:700;transform:scaleX(0.67);transform-origin:0 0;">PDF</div>
<svg class="r" style="left:1035px;top:173px;" width="30" height="24" viewBox="0 0 30 24" preserveAspectRatio="none"><defs><linearGradient id="rg109" x1="0" y1="0.5" x2="1" y2="0.3"><stop offset="0" stop-color="#111"/><stop offset="0.55" stop-color="#3a3a3a"/><stop offset="1" stop-color="#8a8a8a"/></linearGradient><filter id="bf109" x="-20%" y="-20%" width="140%" height="140%"><feGaussianBlur stdDeviation="0.5"/></filter></defs><g transform="translate(10.7,11.6) scale(0.82)" filter="url(#bf109)"><path d="M-6.5 8.2q4 1 7.4 0.2" fill="none" stroke="#dedede" stroke-width="1"/><path d="M3 7.4l7.4-0.4 2.6-1 -2.6 4.2 -5.6 0.2z" fill="#a8a8a8" opacity="0.75"/><ellipse cx="0" cy="0" rx="5.8" ry="6.8" fill="#f1f1f1" stroke="url(#rg109)" stroke-width="1.55"/><path d="M-3.6 -3.4a5 5.4 0 0 0 0.4 7.4" fill="none" stroke="#cfcfcf" stroke-width="0.8"/><path d="M-0.3 0.4l1.7-1.5 7.8 0.8 3.3 2.6 -3.5 5 -6.8-1.5z" fill="#2e2b2b"/><path d="M6.2 2.2l3.6 0.6 -1.6 3.4 -2.6-0.6z" fill="#8c8c8c" opacity="0.8"/><ellipse cx="5" cy="3.4" rx="1.7" ry="1.5" fill="#0c0c0c"/></g></svg>
<div class="t" style="left:1061.20px;top:178.74px;font-size:12px;color:#000;letter-spacing:0.2px;-webkit-text-stroke:0.15px #000;">db1</div>
<div class="t" style="left:1060.80px;top:199.64px;font-size:12px;color:#7a7a7a;letter-spacing:0.45px;transform:translateX(-50%);">session_count</div>
<div class="r" style="left:787.0px;top:227px;width:1px;height:114.5px;background:#dfe4ea;"></div>
<div class="r" style="left:873.9px;top:227px;width:1px;height:114.5px;background:#dfe4ea;"></div>
<div class="r" style="left:960.9px;top:227px;width:1px;height:114.5px;background:#dfe4ea;"></div>
<div class="r" style="left:1047.8px;top:227px;width:1px;height:114.5px;background:#dfe4ea;"></div>
<div class="r" style="left:1134.8px;top:227px;width:1px;height:114.5px;background:#dfe4ea;"></div>
<div class="r" style="left:1221.7px;top:227px;width:1px;height:114.5px;background:#dfe4ea;"></div>
<div class="r" style="left:1308.6px;top:227px;width:1px;height:114.5px;background:#dfe4ea;"></div>
<div class="r" style="left:756px;top:280px;width:608.5px;height:1px;background:#dfe4ea;"></div>
<div class="r" style="left:756px;top:332px;width:608.5px;height:1px;background:#dfe3ea;"></div>
<div class="t" style="left:787.50px;top:341.69px;font-size:11px;color:#666;letter-spacing:0.5px;transform:translateX(-50%);">04:00 PM</div>
<div class="t" style="left:874.40px;top:341.69px;font-size:11px;color:#666;letter-spacing:0.5px;transform:translateX(-50%);">08:00 PM</div>
<div class="t" style="left:961.40px;top:341.69px;font-size:11px;color:#666;letter-spacing:0.5px;transform:translateX(-50%);">May 25</div>
<div class="t" style="left:1048.30px;top:341.69px;font-size:11px;color:#666;letter-spacing:0.5px;transform:translateX(-50%);">04:00 AM</div>
<div class="t" style="left:1135.30px;top:341.69px;font-size:11px;color:#666;letter-spacing:0.5px;transform:translateX(-50%);">08:00 AM</div>
<div class="t" style="left:1222.20px;top:341.69px;font-size:11px;color:#666;letter-spacing:0.42px;transform:translateX(-50%);">12:00 PM</div>
<div class="t" style="left:1309.10px;top:341.69px;font-size:11px;color:#666;letter-spacing:0.5px;transform:translateX(-50%);">04:00 PM</div>
<div class="r" style="left:756px;top:359px;width:608.5px;height:25.5px;background:#e6f0fa;border-top:1px solid #d0deee;border-bottom:1px solid #d0deee;"></div>
<div class="r" style="left:787.0px;top:360px;width:1px;height:23.5px;background:#cfdcec;"></div>
<div class="r" style="left:960.9px;top:360px;width:1px;height:23.5px;background:#cfdcec;"></div>
<div class="r" style="left:1134.8px;top:360px;width:1px;height:23.5px;background:#cfdcec;"></div>
<div class="r" style="left:1308.6px;top:360px;width:1px;height:23.5px;background:#cfdcec;"></div>
<div class="t" style="left:791.00px;top:371.19px;font-size:11px;color:#929ba8;letter-spacing:0.5px;">04:00 PM</div>
<div class="t" style="left:965.00px;top:371.19px;font-size:11px;color:#929ba8;letter-spacing:0.5px;">May 25</div>
<div class="t" style="left:1139.00px;top:371.19px;font-size:11px;color:#929ba8;letter-spacing:0.5px;">08:00 AM</div>
<div class="t" style="left:1312.60px;top:371.19px;font-size:11px;color:#929ba8;letter-spacing:0.5px;width:51.90000000000009px;overflow:hidden;">04:00 PM</div>
<div class="r" style="left:751.4px;top:363.3px;width:8.4px;height:15.6px;background:#f4f4f4;border:1px solid #9a9a9a;"></div>
<div class="r" style="left:754.3px;top:367.4px;width:0.9px;height:7.4px;background:#777;"></div>
<div class="r" style="left:756.1px;top:367.4px;width:0.9px;height:7.4px;background:#777;"></div>
<div class="r" style="left:1360.2px;top:363.3px;width:8.4px;height:15.6px;background:#f4f4f4;border:1px solid #9a9a9a;"></div>
<div class="r" style="left:1363.1000000000001px;top:367.4px;width:0.9px;height:7.4px;background:#777;"></div>
<div class="r" style="left:1364.9px;top:367.4px;width:0.9px;height:7.4px;background:#777;"></div>
<div class="r" style="left:746px;top:395px;width:629px;height:1px;background:#e3e3e3;"></div>
<div class="r" style="left:1043px;top:393px;width:34px;height:1px;background:#dcdcdc;"></div>
<div class="r" style="left:1043px;top:397px;width:34px;height:1px;background:#dcdcdc;"></div>
<div class="r" style="left:757px;top:238.3px;width:7px;height:7px;background:#ff9d00;border-radius:50%;"></div>
<div class="t" style="left:765.20px;top:235.98px;font-size:11.6px;color:#111;font-weight:700;letter-spacing:0.22px;">H: 5</div>
<div class="r" style="left:757px;top:320.3px;width:7px;height:7px;background:#ff9d00;border-radius:50%;"></div>
<div class="t" style="left:765.20px;top:318.08px;font-size:11.6px;color:#111;font-weight:700;letter-spacing:0.22px;">L: 5</div>
<div class="t" style="left:1364.20px;top:268.79px;font-size:11px;color:#000;letter-spacing:0.3px;transform:translateX(-100%);">5</div>
<div class="r" style="left:1273px;top:277.6px;width:6px;height:4px;background:#6a1fa8;border-radius:2px;"></div>
<div class="r" style="left:1275px;top:371px;width:1.6px;height:1px;background:#6a1fa8;"></div>
<svg class="r" style="left:1035px;top:403px;" width="30" height="24" viewBox="0 0 30 24" preserveAspectRatio="none"><defs><linearGradient id="rg153" x1="0" y1="0.5" x2="1" y2="0.3"><stop offset="0" stop-color="#111"/><stop offset="0.55" stop-color="#3a3a3a"/><stop offset="1" stop-color="#8a8a8a"/></linearGradient><filter id="bf153" x="-20%" y="-20%" width="140%" height="140%"><feGaussianBlur stdDeviation="0.5"/></filter></defs><g transform="translate(10.7,11.6) scale(0.82)" filter="url(#bf153)"><path d="M-6.5 8.2q4 1 7.4 0.2" fill="none" stroke="#dedede" stroke-width="1"/><path d="M3 7.4l7.4-0.4 2.6-1 -2.6 4.2 -5.6 0.2z" fill="#a8a8a8" opacity="0.75"/><ellipse cx="0" cy="0" rx="5.8" ry="6.8" fill="#f1f1f1" stroke="url(#rg153)" stroke-width="1.55"/><path d="M-3.6 -3.4a5 5.4 0 0 0 0.4 7.4" fill="none" stroke="#cfcfcf" stroke-width="0.8"/><path d="M-0.3 0.4l1.7-1.5 7.8 0.8 3.3 2.6 -3.5 5 -6.8-1.5z" fill="#2e2b2b"/><path d="M6.2 2.2l3.6 0.6 -1.6 3.4 -2.6-0.6z" fill="#8c8c8c" opacity="0.8"/><ellipse cx="5" cy="3.4" rx="1.7" ry="1.5" fill="#0c0c0c"/></g></svg>
<div class="t" style="left:1061.20px;top:408.74px;font-size:12px;color:#000;letter-spacing:0.2px;-webkit-text-stroke:0.15px #000;">db1</div>
<div class="t" style="left:1060.80px;top:429.64px;font-size:12px;color:#7a7a7a;letter-spacing:0.41px;transform:translateX(-50%);">tablespace|reads</div>
<div class="r" style="left:787.0px;top:457px;width:1px;height:114.5px;background:#dfe4ea;"></div>
<div class="r" style="left:873.9px;top:457px;width:1px;height:114.5px;background:#dfe4ea;"></div>
<div class="r" style="left:960.9px;top:457px;width:1px;height:114.5px;background:#dfe4ea;"></div>
<div class="r" style="left:1047.8px;top:457px;width:1px;height:114.5px;background:#dfe4ea;"></div>
<div class="r" style="left:1134.8px;top:457px;width:1px;height:114.5px;background:#dfe4ea;"></div>
<div class="r" style="left:1221.7px;top:457px;width:1px;height:114.5px;background:#dfe4ea;"></div>
<div class="r" style="left:1308.6px;top:457px;width:1px;height:114.5px;background:#dfe4ea;"></div>
<div class="r" style="left:756px;top:510px;width:608.5px;height:1px;background:#dfe4ea;"></div>
<div class="r" style="left:756px;top:562px;width:608.5px;height:1px;background:#dfe3ea;"></div>
<div class="t" style="left:787.50px;top:571.69px;font-size:11px;color:#666;letter-spacing:0.5px;transform:translateX(-50%);">04:00 PM</div>
<div class="t" style="left:874.40px;top:571.69px;font-size:11px;color:#666;letter-spacing:0.5px;transform:translateX(-50%);">08:00 PM</div>
<div class="t" style="left:961.40px;top:571.69px;font-size:11px;color:#666;letter-spacing:0.5px;transform:translateX(-50%);">May 25</div>
<div class="t" style="left:1048.30px;top:571.69px;font-size:11px;color:#666;letter-spacing:0.5px;transform:translateX(-50%);">04:00 AM</div>
<div class="t" style="left:1135.30px;top:571.69px;font-size:11px;color:#666;letter-spacing:0.5px;transform:translateX(-50%);">08:00 AM</div>
<div class="t" style="left:1222.20px;top:571.69px;font-size:11px;color:#666;letter-spacing:0.42px;transform:translateX(-50%);">12:00 PM</div>
<div class="t" style="left:1309.10px;top:571.69px;font-size:11px;color:#666;letter-spacing:0.5px;transform:translateX(-50%);">04:00 PM</div>
<div class="r" style="left:756px;top:589px;width:608.5px;height:25.5px;background:#e6f0fa;border-top:1px solid #d0deee;border-bottom:1px solid #d0deee;"></div>
<div class="r" style="left:787.0px;top:590px;width:1px;height:23.5px;background:#cfdcec;"></div>
<div class="r" style="left:960.9px;top:590px;width:1px;height:23.5px;background:#cfdcec;"></div>
<div class="r" style="left:1134.8px;top:590px;width:1px;height:23.5px;background:#cfdcec;"></div>
<div class="r" style="left:1308.6px;top:590px;width:1px;height:23.5px;background:#cfdcec;"></div>
<div class="t" style="left:791.00px;top:601.19px;font-size:11px;color:#929ba8;letter-spacing:0.5px;">04:00 PM</div>
<div class="t" style="left:965.00px;top:601.19px;font-size:11px;color:#929ba8;letter-spacing:0.5px;">May 25</div>
<div class="t" style="left:1139.00px;top:601.19px;font-size:11px;color:#929ba8;letter-spacing:0.5px;">08:00 AM</div>
<div class="t" style="left:1312.60px;top:601.19px;font-size:11px;color:#929ba8;letter-spacing:0.5px;width:51.90000000000009px;overflow:hidden;">04:00 PM</div>
<div class="r" style="left:751.4px;top:593.3px;width:8.4px;height:15.6px;background:#f4f4f4;border:1px solid #9a9a9a;"></div>
<div class="r" style="left:754.3px;top:597.4px;width:0.9px;height:7.4px;background:#777;"></div>
<div class="r" style="left:756.1px;top:597.4px;width:0.9px;height:7.4px;background:#777;"></div>
<div class="r" style="left:1360.2px;top:593.3px;width:8.4px;height:15.6px;background:#f4f4f4;border:1px solid #9a9a9a;"></div>
<div class="r" style="left:1363.1000000000001px;top:597.4px;width:0.9px;height:7.4px;background:#777;"></div>
<div class="r" style="left:1364.9px;top:597.4px;width:0.9px;height:7.4px;background:#777;"></div>
<div class="r" style="left:746px;top:625px;width:629px;height:1px;background:#e3e3e3;"></div>
<div class="r" style="left:1043px;top:623px;width:34px;height:1px;background:#dcdcdc;"></div>
<div class="r" style="left:1043px;top:627px;width:34px;height:1px;background:#dcdcdc;"></div>
<div class="r" style="left:757px;top:468.3px;width:7px;height:7px;background:#ff9d00;border-radius:50%;"></div>
<div class="t" style="left:765.20px;top:465.98px;font-size:11.6px;color:#111;font-weight:700;letter-spacing:0.22px;">H: 104</div>
<div class="r" style="left:757px;top:550.3px;width:7px;height:7px;background:#ff9d00;border-radius:50%;"></div>
<div class="t" style="left:765.20px;top:548.08px;font-size:11.6px;color:#111;font-weight:700;letter-spacing:0.22px;">L: 104</div>
<div class="t" style="left:1364.20px;top:498.79px;font-size:11px;color:#000;letter-spacing:0.3px;transform:translateX(-100%);">104</div>
<div class="r" style="left:1273px;top:507.6px;width:6px;height:4px;background:#6a1fa8;border-radius:2px;"></div>
<div class="r" style="left:1275px;top:601px;width:1.6px;height:1px;background:#6a1fa8;"></div>
<svg class="r" style="left:1035px;top:633px;" width="30" height="24" viewBox="0 0 30 24" preserveAspectRatio="none"><defs><linearGradient id="rg197" x1="0" y1="0.5" x2="1" y2="0.3"><stop offset="0" stop-color="#111"/><stop offset="0.55" stop-color="#3a3a3a"/><stop offset="1" stop-color="#8a8a8a"/></linearGradient><filter id="bf197" x="-20%" y="-20%" width="140%" height="140%"><feGaussianBlur stdDeviation="0.5"/></filter></defs><g transform="translate(10.7,11.6) scale(0.82)" filter="url(#bf197)"><path d="M-6.5 8.2q4 1 7.4 0.2" fill="none" stroke="#dedede" stroke-width="1"/><path d="M3 7.4l7.4-0.4 2.6-1 -2.6 4.2 -5.6 0.2z" fill="#a8a8a8" opacity="0.75"/><ellipse cx="0" cy="0" rx="5.8" ry="6.8" fill="#f1f1f1" stroke="url(#rg197)" stroke-width="1.55"/><path d="M-3.6 -3.4a5 5.4 0 0 0 0.4 7.4" fill="none" stroke="#cfcfcf" stroke-width="0.8"/><path d="M-0.3 0.4l1.7-1.5 7.8 0.8 3.3 2.6 -3.5 5 -6.8-1.5z" fill="#2e2b2b"/><path d="M6.2 2.2l3.6 0.6 -1.6 3.4 -2.6-0.6z" fill="#8c8c8c" opacity="0.8"/><ellipse cx="5" cy="3.4" rx="1.7" ry="1.5" fill="#0c0c0c"/></g></svg>
<div class="t" style="left:1061.20px;top:638.74px;font-size:12px;color:#000;letter-spacing:0.2px;-webkit-text-stroke:0.15px #000;">db1</div>
<div class="t" style="left:1060.80px;top:659.64px;font-size:12px;color:#7a7a7a;letter-spacing:0.46px;transform:translateX(-50%);">tablespace|tablespace_name</div>
<div class="r" style="left:787.0px;top:687px;width:1px;height:114.5px;background:#dfe4ea;"></div>
<div class="r" style="left:873.9px;top:687px;width:1px;height:114.5px;background:#dfe4ea;"></div>
<div class="r" style="left:960.9px;top:687px;width:1px;height:114.5px;background:#dfe4ea;"></div>
<div class="r" style="left:1047.8px;top:687px;width:1px;height:114.5px;background:#dfe4ea;"></div>
<div class="r" style="left:1134.8px;top:687px;width:1px;height:114.5px;background:#dfe4ea;"></div>
<div class="r" style="left:1221.7px;top:687px;width:1px;height:114.5px;background:#dfe4ea;"></div>
<div class="r" style="left:1308.6px;top:687px;width:1px;height:114.5px;background:#dfe4ea;"></div>
<div class="r" style="left:756px;top:740px;width:608.5px;height:1px;background:#dfe4ea;"></div>
<div class="r" style="left:756px;top:792px;width:608.5px;height:1px;background:#dfe3ea;"></div>
<div class="t" style="left:787.50px;top:801.69px;font-size:11px;color:#666;letter-spacing:0.5px;transform:translateX(-50%);">04:00 PM</div>
<div class="t" style="left:874.40px;top:801.69px;font-size:11px;color:#666;letter-spacing:0.5px;transform:translateX(-50%);">08:00 PM</div>
<div class="t" style="left:961.40px;top:801.69px;font-size:11px;color:#666;letter-spacing:0.5px;transform:translateX(-50%);">May 25</div>
<div class="t" style="left:1048.30px;top:801.69px;font-size:11px;color:#666;letter-spacing:0.5px;transform:translateX(-50%);">04:00 AM</div>
<div class="t" style="left:1135.30px;top:801.69px;font-size:11px;color:#666;letter-spacing:0.5px;transform:translateX(-50%);">08:00 AM</div>
<div class="t" style="left:1222.20px;top:801.69px;font-size:11px;color:#666;letter-spacing:0.42px;transform:translateX(-50%);">12:00 PM</div>
<div class="t" style="left:1309.10px;top:801.69px;font-size:11px;color:#666;letter-spacing:0.5px;transform:translateX(-50%);">04:00 PM</div>
<div class="r" style="left:756px;top:819px;width:608.5px;height:25.5px;background:#e6f0fa;border-top:1px solid #d0deee;border-bottom:1px solid #d0deee;"></div>
<div class="r" style="left:787.0px;top:820px;width:1px;height:23.5px;background:#cfdcec;"></div>
<div class="r" style="left:960.9px;top:820px;width:1px;height:23.5px;background:#cfdcec;"></div>
<div class="r" style="left:1134.8px;top:820px;width:1px;height:23.5px;background:#cfdcec;"></div>
<div class="r" style="left:1308.6px;top:820px;width:1px;height:23.5px;background:#cfdcec;"></div>
<div class="t" style="left:791.00px;top:831.19px;font-size:11px;color:#929ba8;letter-spacing:0.5px;">04:00 PM</div>
<div class="t" style="left:965.00px;top:831.19px;font-size:11px;color:#929ba8;letter-spacing:0.5px;">May 25</div>
<div class="t" style="left:1139.00px;top:831.19px;font-size:11px;color:#929ba8;letter-spacing:0.5px;">08:00 AM</div>
<div class="t" style="left:1312.60px;top:831.19px;font-size:11px;color:#929ba8;letter-spacing:0.5px;width:51.90000000000009px;overflow:hidden;">04:00 PM</div>
<div class="r" style="left:751.4px;top:823.3px;width:8.4px;height:15.6px;background:#f4f4f4;border:1px solid #9a9a9a;"></div>
<div class="r" style="left:754.3px;top:827.4px;width:0.9px;height:7.4px;background:#777;"></div>
<div class="r" style="left:756.1px;top:827.4px;width:0.9px;height:7.4px;background:#777;"></div>
<div class="r" style="left:1360.2px;top:823.3px;width:8.4px;height:15.6px;background:#f4f4f4;border:1px solid #9a9a9a;"></div>
<div class="r" style="left:1363.1000000000001px;top:827.4px;width:0.9px;height:7.4px;background:#777;"></div>
<div class="r" style="left:1364.9px;top:827.4px;width:0.9px;height:7.4px;background:#777;"></div>
<div class="r" style="left:746px;top:855px;width:629px;height:1px;background:#e3e3e3;"></div>
<div class="r" style="left:1043px;top:853px;width:34px;height:1px;background:#dcdcdc;"></div>
<div class="r" style="left:1043px;top:857px;width:34px;height:1px;background:#dcdcdc;"></div>
<div class="t" style="left:755.80px;top:692.84px;font-size:12px;color:#111;font-weight:700;letter-spacing:0.17px;">Last Value: MyTablespace</div>
<div class="r" style="left:1274px;top:714px;width:1px;height:78px;background:#cfcfcf;"></div>
<div class="r" style="left:1264.6px;top:729.2px;width:20px;height:20px;background:rgba(123,31,162,0.25);border-radius:50%;"></div>
<div class="r" style="left:1270.6px;top:735.2px;width:8px;height:8px;background:#7a1ea1;"></div>
<svg class="r" style="left:1320px;top:652px;" width="12" height="18" viewBox="0 0 12 18" preserveAspectRatio="none"><circle cx="5.7" cy="4.8" r="1.15" fill="#0079b8"/><circle cx="5.7" cy="9.8" r="1.15" fill="#0079b8"/><circle cx="5.7" cy="14.6" r="1.15" fill="#0079b8"/></svg>
<svg class="r" style="left:1349px;top:654px;" width="14" height="14" viewBox="0 0 14 14" preserveAspectRatio="none"><path d="M1.2 1.2l11.4 12M12.6 1.2L1.2 13.2" stroke="#0079b8" stroke-width="1.3" stroke-linecap="round"/></svg>
<div class="r" style="left:1273.2px;top:758.5px;width:36px;height:18px;background:#e6e1e9;border-radius:2px;box-shadow:0 1px 3px rgba(0,0,0,0.28);"></div>
<div class="t" style="left:1279.80px;top:762.49px;font-size:11px;color:#444;letter-spacing:0.05px;">db1</div>
<div class="r" style="left:1075px;top:667px;width:289.8px;height:47.5px;background:rgba(247,247,247,0.88);border:1px solid #7c7c7c;border-radius:3.5px;box-shadow:1px 1px 2px rgba(0,0,0,0.12);"></div>
<div class="t" style="left:1083.20px;top:678.53px;font-size:10px;color:#333;letter-spacing:0.32px;">Wednesday, May 25, 02:25:09 PM</div>
<div class="r" style="left:1083.6px;top:696.2px;width:5.6px;height:5.6px;background:#7a1ea1;border-radius:50%;"></div>
<div class="t" style="left:1094.30px;top:692.74px;font-size:12px;color:#333;letter-spacing:0.5px;">tablespace|tablespace_name : <b style="letter-spacing:0.2px;margin-left:-2.4px">MyTablespace</b></div>
<svg class="r" style="left:1405px;top:873px;" width="10" height="10" viewBox="0 0 10 10" preserveAspectRatio="none"><path d="M10 3.4Q9.4 9.4 3.4 10H10z" fill="#1a1a1a"/></svg>
</div>
</body></html>
